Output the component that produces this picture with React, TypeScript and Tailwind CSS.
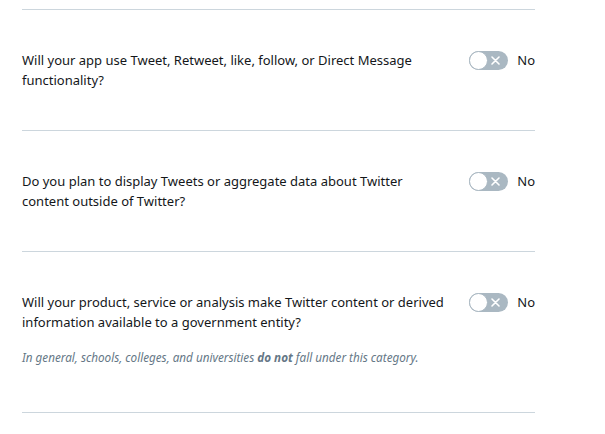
import React from "react";

const font = { fontFamily: '"Noto Sans", "Open Sans", sans-serif' };

function Toggle() {
  return (
    <div className="flex items-center gap-[9px] shrink-0">
      <div className="relative w-[39px] h-[19px] rounded-full bg-[#aab8c2]">
        <div className="absolute left-0 top-0 w-[19px] h-[19px] rounded-full bg-white border border-[#aab8c2]" />
        <svg className="absolute right-[8px] top-[5px]" width="9" height="9" viewBox="0 0 9 9">
          <path d="M1 1 L8 8 M8 1 L1 8" stroke="white" strokeWidth="1.6" strokeLinecap="round" />
        </svg>
      </div>
      <span className="text-[13px] leading-[20px] text-[#14171a]">No</span>
    </div>
  );
}

function Section({ q, note }: { q: string; note?: React.ReactNode }) {
  return (
    <div className={`border-t border-[#ccd6dd] pt-[40px] ${note ? "pb-[46px]" : "pb-[40px]"}`}>
      <div className="flex items-start justify-between gap-4">
        <p className="w-[430px] text-[13px] leading-[20px] text-[#14171a]">{q}</p>
        <Toggle />
      </div>
      {note && (
        <p className="mt-[16px] text-[11.7px] leading-[18px] italic text-[#657786]">{note}</p>
      )}
    </div>
  );
}

export default function App() {
  return (
    <div className="bg-white w-[605px] h-[434px] overflow-hidden" style={font}>
      <div className="ml-[22px] w-[513px] pt-[9px]">
        <Section q="Will your app use Tweet, Retweet, like, follow, or Direct Message functionality?" />
        <Section q="Do you plan to display Tweets or aggregate data about Twitter content outside of Twitter?" />
        <Section
          q="Will your product, service or analysis make Twitter content or derived information available to a government entity?"
          note={
            <>
              In general, schools, colleges, and universities <b className="font-bold">do not</b> fall under this category.
            </>
          }
        />
        <div className="border-t border-[#ccd6dd]" />
      </div>
    </div>
  );
}
